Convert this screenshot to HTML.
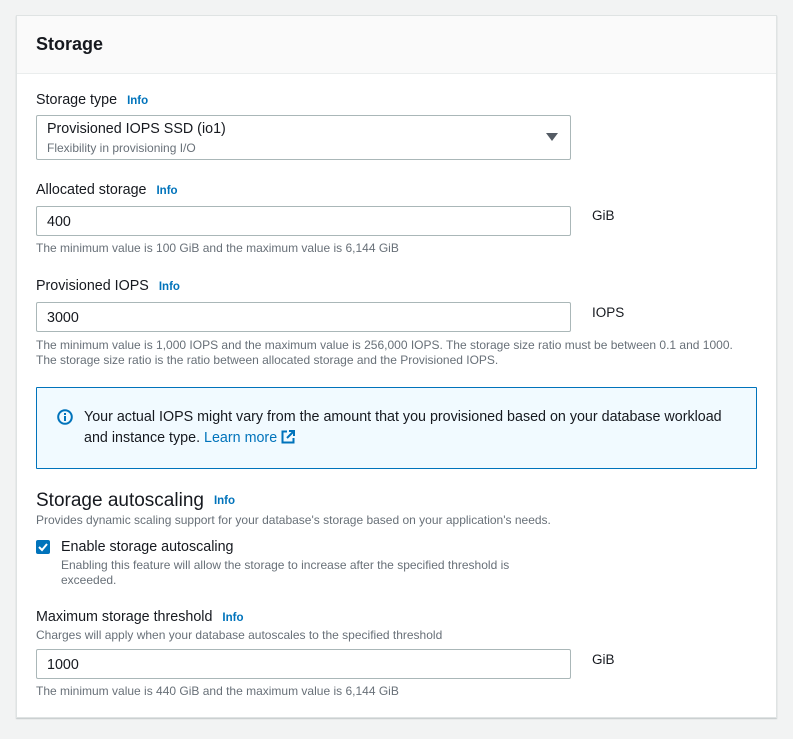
<!DOCTYPE html>
<html><head><style>
*{margin:0;padding:0;box-sizing:border-box}
body{width:793px;height:739px;background:#f2f3f3;font-family:"Liberation Sans",sans-serif;color:#16191f;position:relative;overflow:hidden}
.card{position:absolute;left:16px;top:15px;width:761px;height:703px;background:#fff;border:1px solid #dfe3e3;box-shadow:0 1px 1px rgba(0,28,36,.2)}
.hdr{position:absolute;left:0;top:0;right:0;height:58px;background:#fafafa;border-bottom:1px solid #eaeded}
.a{position:absolute;white-space:nowrap}
.lbl{font-size:14.3px}
.info{font-size:11.5px;font-weight:bold;color:#0073bb;margin-left:10px}
.inp{position:absolute;left:19px;width:535px;border:1px solid #aab7b8;border-radius:2px;background:#fff}
.hint{font-size:12px;color:#687078}
.unit{font-size:13.5px}
</style></head><body>
<div class="card">
<div class="hdr"><div class="a" style="left:19px;top:18px;font-size:18px;font-weight:bold">Storage</div></div>
<div class="a lbl" style="left:19px;top:76px">Storage type<span class="info">Info</span></div>
<div class="inp" style="top:99px;height:45px"></div>
<div class="a" style="left:30px;top:105px;font-size:14.3px">Provisioned IOPS SSD (io1)</div>
<div class="a hint" style="left:30px;top:125px">Flexibility in provisioning I/O</div>
<div class="a" style="left:529px;top:117px;width:0;height:0;border-left:6px solid transparent;border-right:6px solid transparent;border-top:8px solid #545b64"></div>

<div class="a lbl" style="left:19px;top:166px">Allocated storage<span class="info">Info</span></div>
<div class="inp" style="top:190px;height:30px"></div>
<div class="a" style="left:30px;top:198px;font-size:14.3px">400</div>
<div class="a unit" style="left:575px;top:192px">GiB</div>
<div class="a hint" style="left:19px;top:225px">The minimum value is 100 GiB and the maximum value is 6,144 GiB</div>

<div class="a lbl" style="left:19px;top:262px">Provisioned IOPS<span class="info">Info</span></div>
<div class="inp" style="top:286px;height:30px"></div>
<div class="a" style="left:30px;top:294px;font-size:14.3px">3000</div>
<div class="a unit" style="left:575px;top:289px">IOPS</div>
<div class="a hint" style="left:19px;top:322px;line-height:15px">The minimum value is 1,000 IOPS and the maximum value is 256,000 IOPS. The storage size ratio must be between 0.1 and 1000.<br>The storage size ratio is the ratio between allocated storage and the Provisioned IOPS.</div>

<div class="a" style="left:19px;top:371px;width:721px;height:82px;background:#f1faff;border:1px solid #0073bb;border-radius:1px"></div>
<svg class="a" style="left:40px;top:393px" width="16" height="16" viewBox="0 0 16 16"><circle cx="8" cy="8" r="6.8" fill="none" stroke="#0073bb" stroke-width="2"/><rect x="7" y="7" width="2" height="5" fill="#0073bb"/><rect x="7" y="4" width="2" height="2" fill="#0073bb"/></svg>
<div class="a" style="left:67px;top:391px;font-size:14.3px;line-height:21px">Your actual IOPS might vary from the amount that you provisioned based on your database workload<br>and instance type. <span style="color:#0073bb">Learn more</span> <svg width="14" height="14" viewBox="0 0 14 14" style="vertical-align:-2px"><path d="M6 1.5H1.5v11h11V8" fill="none" stroke="#0073bb" stroke-width="2"/><path d="M8 1h5v5M13 1L6 8" fill="none" stroke="#0073bb" stroke-width="2"/></svg></div>

<div class="a" style="left:19px;top:474px;font-size:19px">Storage autoscaling<span class="info" style="vertical-align:2px">Info</span></div>
<div class="a hint" style="left:19px;top:497px">Provides dynamic scaling support for your database's storage based on your application's needs.</div>
<div class="a" style="left:19px;top:524px;width:14px;height:14px;background:#0073bb;border-radius:2px"><svg width="14" height="14" viewBox="0 0 14 14"><path d="M3 7l3 3 5-6" fill="none" stroke="#fff" stroke-width="2"/></svg></div>
<div class="a lbl" style="left:44px;top:523px">Enable storage autoscaling</div>
<div class="a hint" style="left:44px;top:542px;line-height:15px">Enabling this feature will allow the storage to increase after the specified threshold is<br>exceeded.</div>

<div class="a lbl" style="left:19px;top:593px">Maximum storage threshold<span class="info">Info</span></div>
<div class="a hint" style="left:19px;top:612px">Charges will apply when your database autoscales to the specified threshold</div>
<div class="inp" style="top:633px;height:30px"></div>
<div class="a" style="left:30px;top:641px;font-size:14.3px">1000</div>
<div class="a unit" style="left:575px;top:636px">GiB</div>
<div class="a hint" style="left:19px;top:668px">The minimum value is 440 GiB and the maximum value is 6,144 GiB</div>
</div>
</body></html>
